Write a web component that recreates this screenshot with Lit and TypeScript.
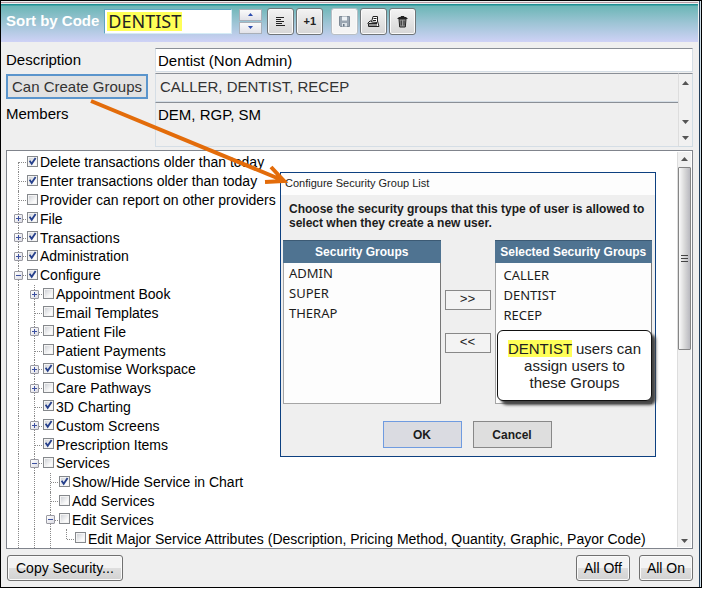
import { LitElement, html, css, svg, nothing } from "lit";
import { customElement, property } from "lit/decorators.js";
import { classMap } from "lit/directives/class-map.js";

interface Permission {
  label: string;
  level: number;
  checked?: boolean;
  node?: "open" | "closed";
  /** first and last rows shorten their guide line to half the row */
  first?: boolean;
  last?: boolean;
}

const PERMISSIONS: Permission[] = [
  { label: "Delete transactions older than today", level: 0, checked: true, first: true },
  { label: "Enter transactions older than today", level: 0, checked: true },
  { label: "Provider can report on other providers", level: 0 },
  { label: "File", level: 0, checked: true, node: "closed" },
  { label: "Transactions", level: 0, checked: true, node: "closed" },
  { label: "Administration", level: 0, checked: true, node: "closed" },
  { label: "Configure", level: 0, checked: true, node: "open" },
  { label: "Appointment Book", level: 1, node: "closed" },
  { label: "Email Templates", level: 1 },
  { label: "Patient File", level: 1, node: "closed" },
  { label: "Patient Payments", level: 1 },
  { label: "Customise Workspace", level: 1, checked: true, node: "closed" },
  { label: "Care Pathways", level: 1, node: "closed" },
  { label: "3D Charting", level: 1, checked: true },
  { label: "Custom Screens", level: 1, checked: true, node: "closed" },
  { label: "Prescription Items", level: 1, checked: true },
  { label: "Services", level: 1, node: "open" },
  { label: "Show/Hide Service in Chart", level: 2, checked: true },
  { label: "Add Services", level: 2 },
  { label: "Edit Services", level: 2, node: "open" },
  {
    label: "Edit Major Service Attributes (Description, Pricing Method, Quantity, Graphic, Payor Code)",
    level: 3,
    last: true,
  },
];

@customElement("permission-tree")
export class PermissionTree extends LitElement {
  @property({ attribute: false }) items: Permission[] = [];

  static styles = css`
    :host { display: flex; flex: 1; min-width: 0; }
    .tree { display: flex; flex-direction: column; flex: 1; min-width: 0; padding: 2px 0 0 3px; overflow: hidden; font-size: 14px; }
    .row { display: flex; flex: 1; min-height: 18px; align-items: center; white-space: nowrap; }
    .guide { position: relative; align-self: stretch; flex: none; width: 16px; display: flex; align-items: center; justify-content: center; }
    .guide::before { content: ""; position: absolute; left: 8px; top: 0; bottom: 0; border-left: 1px dotted #8a8a8a; }
    .guide.first::before { top: 50%; }
    .guide.last::before { bottom: 50%; }
    .branch::after { content: ""; position: absolute; left: 9px; right: 0; top: 50%; border-top: 1px dotted #8a8a8a; }
    .toggle { position: relative; z-index: 1; box-sizing: border-box; width: 9px; height: 9px; margin: 0 0 0 1px; padding: 0; border: 1px solid #9a9aa2; border-radius: 1px; background: linear-gradient(135deg, #fff, #dcdce4); }
    .toggle svg { display: block; width: 7px; height: 7px; }
    .item { display: flex; align-items: center; gap: 2px; padding-left: 1px; line-height: 18px; }
    .box { appearance: none; display: block; box-sizing: border-box; width: 11px; height: 11px; margin: 0 0 2px; border: 1px solid #85888c; outline: none; background: linear-gradient(135deg, #c9ccd2, #fafafa 70%); box-shadow: inset 0 0 0 1px #f4f4f4; }
    .check { position: relative; display: flex; }
    .check svg { position: absolute; left: 0; top: 0; width: 11px; height: 11px; pointer-events: none; }
  `;

  render() {
    return html`<div class="tree" role="tree" aria-label="Permissions">
      ${this.items.map((p) => this.row(p))}
    </div>`;
  }

  private row(p: Permission) {
    const guides = Array.from({ length: p.level + 1 }, (_, i) => i);
    return html`<div class="row" role="treeitem" aria-level=${p.level + 1}>
      ${guides.map((i) => {
        const own = i === p.level;
        return html`<span class=${classMap({ guide: true, branch: own, first: own && !!p.first, last: own && !!p.last })}>
          ${own && p.node
            ? html`<button class="toggle" aria-label="${p.node === "open" ? "Collapse" : "Expand"} ${p.label}">
                <svg viewBox="0 0 7 7" stroke="#3c50a0" fill="none">
                  <path d=${p.node === "open" ? "M1 3.5h5" : "M1 3.5h5M3.5 1v5"} />
                </svg>
              </button>`
            : nothing}
        </span>`;
      })}
      <label class="item">
        <span class="check">
          <input class="box" type="checkbox" .checked=${!!p.checked} />
          ${p.checked
            ? html`<svg viewBox="0 0 11 11" fill="none" stroke="#26408c" stroke-width="1.8"><path d="M2.6 4.8L4.7 7.8L8.6 2" /></svg>`
            : nothing}
        </span>
        <span>${p.label}</span>
      </label>
    </div>`;
  }
}

const icon = {
  up: svg`<path d="M0 4L3.500 0L7 4z"/>`,
  down: svg`<path d="M0 0L3.500 4L7 0z"/>`,
};

@customElement("group-dialog")
export class GroupDialog extends LitElement {
  static styles = css`
    :host { display: block; box-sizing: border-box; border: 1px solid #0d4080; background: #efefef; color: #1c1c1c; }
    .title { margin: 0; padding: 0 4px; height: 22px; background: #fdfdfd; font-size: 11px; font-weight: normal; line-height: 21px; }
    .message { margin: 0; padding: 7px 8px 10px; font-size: 12px; font-weight: bold; line-height: 14px; }
    .lists { display: grid; grid-template-columns: 1fr 46px 1fr; gap: 4px; padding: 0 3px 0 2px; }
    .list { display: flex; flex-direction: column; height: 164px; box-sizing: border-box; border: 1px solid #a5a5a5; border-right-color: #777; border-top: 0; background: #fdfdfd; }
    .caption { margin: 0 -1px; background: #4f7391; border-top: 1px solid #3c5a74; color: #fff; text-align: center; font-size: 12px; font-weight: bold; line-height: 22px; }
    .options { list-style: none; margin: 0; padding: 0 5px; font: 13px/20px "Noto Sans", sans-serif; }
    .chosen { padding: 2px 8px; }
    .moves { display: flex; flex-direction: column; gap: 23px; padding-top: 50px; }
    .move { height: 20px; padding: 0; border: 1px solid #888; background: #f3f3f3; font: 13px/16px "Liberation Mono", monospace; color: #222; }
    .actions { display: flex; justify-content: center; gap: 11px; padding: 17px 2px 8px 0; }
    .action { box-sizing: border-box; width: 79px; height: 27px; border: 1px solid #888; background: #dedede; font: bold 12px "Liberation Sans", sans-serif; color: #1c1c1c; }
    .primary { border-color: #6f9be0; background: #dadbe1; }
  `;

  render() {
    return html`
      <h2 class="title">Configure Security Group List</h2>
      <p class="message">Choose the security groups that this type of user is allowed to select when they create a new user.</p>
      <div class="lists">
        <section class="list">
          <div class="caption" id="all">Security Groups</div>
          <ul class="options" role="listbox" aria-labelledby="all">
            ${["ADMIN", "SUPER", "THERAP"].map((g) => html`<li role="option">${g}</li>`)}
          </ul>
        </section>
        <div class="moves">
          <button class="move" aria-label="Add">&gt;&gt;</button>
          <button class="move" aria-label="Remove">&lt;&lt;</button>
        </div>
        <section class="list">
          <div class="caption" id="picked">Selected Security Groups</div>
          <ul class="options chosen" role="listbox" aria-labelledby="picked">
            ${["CALLER", "DENTIST", "RECEP"].map((g) => html`<li role="option">${g}</li>`)}
          </ul>
        </section>
      </div>
      <div class="actions">
        <button class="action primary">OK</button>
        <button class="action">Cancel</button>
      </div>
    `;
  }
}

@customElement("app-root")
export class AppRoot extends LitElement {
  static styles = css`
    :host { display: flex; box-sizing: border-box; min-height: 100vh; padding-bottom: 9px; background: #fff; font: 15px/18px "Liberation Sans", Arial, sans-serif; color: #000; }
    .shell { position: relative; display: flex; flex-direction: column; flex: 1; min-width: 0; border: 1px solid #000; background: #efefef; box-shadow: inset -1px 0 #cfdfe8, inset -2px 0 #24405c; }
    .bar { display: flex; align-items: center; gap: 5px; height: 40px; box-sizing: border-box; margin: 1px 3px 0 0; padding: 0 5px 3px; border-top: 1px solid #b79aa5; background: linear-gradient(#e8f0f0 0 1px, #1f8f93 1px 2px, #6cb6b6 3px, #9cc4d4 50%, #cfd2f6); }
    .sort { color: #fff; font-weight: bold; }
    .code { position: relative; display: flex; align-items: center; box-sizing: border-box; width: 128px; height: 25px; padding: 0 3px; border: 1px solid #5da3c2; border-right-color: #d5ecf5; border-bottom-color: #d5ecf5; background: #fff; }
    .mark { position: absolute; left: 2px; top: 2px; width: 75px; height: 19px; background: #ffff58; }
    .codeinput { position: relative; width: 100%; padding: 0; border: 0; outline: 0; background: none; font: 18px/19px "Noto Sans", sans-serif; color: #222; }
    .spin { display: grid; gap: 1px; margin-left: 2px; }
    .spin button { box-sizing: border-box; width: 23px; height: 12px; padding: 0; border: 1px solid #a9afb8; background: linear-gradient(#fafafa, #e2e2e8); display: grid; place-items: center; }
    .spin svg { width: 5px; height: 3px; fill: #2c4cae; }
    .tools { display: flex; gap: 2px; }
    .tools + .tools { margin-left: 3px; }
    .tool { box-sizing: border-box; width: 27px; height: 27px; padding: 0; display: grid; place-items: center; border: 1px solid #707578; border-radius: 3px; background: linear-gradient(#f3f3f3, #e4e4e4 50%, #d6d6d6); box-shadow: inset 0 0 0 1px #fafafa; font: bold 11px "Liberation Sans", sans-serif; color: #222; }
    .tool:disabled { border-color: #b8bec4; background: #f4f4f4; }
    .tool svg { display: block; width: 13px; height: 13px; }

    .form { display: grid; grid-template-columns: 149px minmax(0, 1fr) 15px; grid-template-rows: 25px 29px 45px; padding: 6px 8px 0 5px; }
    .wide { grid-column: 2 / 4; }
    .lab { line-height: 24px; }
    .field { display: block; box-sizing: border-box; width: 100%; height: 100%; margin: 0; padding: 3px 2px; border: 1px solid #d5dee6; border-top-color: #8a8f96; border-radius: 0; background: #efefef; font: inherit; color: #000; outline: 0; resize: none; overflow: hidden; }
    .text { height: 24px; background: #fff; padding: 0 2px; }
    .soft { padding: 4px; color: #333; border-right: 0; }
    .people { border-right: 0; }
    .create { box-sizing: border-box; width: 142px; height: 25px; margin-top: 1px; padding: 0; border: 2px solid #5b95cc; background: #e2e2e2; font: inherit; line-height: 18px; color: #333; }
    .scroll { display: flex; flex-direction: column; justify-content: space-between; align-items: center; flex: none; box-sizing: border-box; width: 14px; border-left: 1px solid #ddd; background: #f1f1f1; fill: #555; }
    .scroll svg { width: 7px; height: 4px; }
    .formscroll { grid-column: 3; grid-row: 2 / 4; width: auto; padding: 7px 0 6px; border-top: 1px solid #8a8f96; border-right: 1px solid #cfdbe3; border-bottom: 1px solid #cfdbe3; }
    .formscroll .mid { margin-top: 22px; }

    .panel { position: relative; display: flex; flex: 1; margin: 3px 8px 0 5px; border: 1px solid #80848c; background: #fff; }
    .treescroll { margin: 1px 1px 1px 0; padding: 5px 0 4px; justify-content: flex-start; gap: 6px; }
    .thumb { display: grid; place-items: center; box-sizing: border-box; width: 13px; height: 183px; border: 1px solid #858585; border-radius: 1px; background: linear-gradient(90deg, #fafafa, #d9d9d9 50%, #b9b9bf); }
    .thumb svg { width: 7px; height: 8px; }
    .end { margin-top: auto; }
    .dialog { position: absolute; left: 273px; top: 21px; width: 376px; }
    .callout { position: absolute; left: 490px; top: 179px; box-sizing: border-box; width: 155px; height: 71px; padding: 9px 0; border: 1px solid #111; border-radius: 6px; background: #fff; box-shadow: 4px 4px 3px #444; text-align: center; line-height: 17px; color: #222; }
    .callout mark { background: #ffff58; color: inherit; }
    .arrow { position: absolute; left: 0; top: 0; width: 300px; height: 200px; pointer-events: none; fill: none; stroke: #e36c0a; stroke-width: 4; }

    .foot { display: flex; gap: 9px; padding: 6px 8px 6px 6px; }
    .push { box-sizing: border-box; height: 26px; padding: 0 7px; border: 1px solid #707070; border-radius: 3px; background: linear-gradient(#f3f3f3 0 48%, #dedede 52%, #d2d2d2); box-shadow: inset 0 0 0 1px #fafafa; font: inherit; font-size: 14px; color: #000; }
    .left { margin-right: auto; padding: 0 8px; }
  `;

  render() {
    const up = html`<svg viewBox="0 0 7 4" aria-hidden="true">${icon.up}</svg>`;
    const down = (cls = "") => html`<svg class=${cls} viewBox="0 0 7 4" aria-hidden="true">${icon.down}</svg>`;
    return html`
      <main class="shell">
        <header class="bar">
          <label class="sort" for="code">Sort by Code</label>
          <span class="code"><span class="mark"></span><input class="codeinput" id="code" value="DENTIST" /></span>
          <span class="spin">
            <button aria-label="Previous">${up}</button>
            <button aria-label="Next">${down()}</button>
          </span>
          <span class="tools">
            <button class="tool" aria-label="List">
              <svg viewBox="0 0 13 13" stroke="#222"><path d="M2 2.500h8M2 4.500h5M2 6.500h8M2 8.500h6M2 10.500h9" /></svg>
            </button>
            <button class="tool">+1</button>
          </span>
          <span class="tools">
            <button class="tool" aria-label="Save" disabled>
              <svg viewBox="0 0 13 13"><path d="M1.500 1.500h10v10h-9l-1-1z" fill="#9aa5b1" stroke="#7f8a96" /><path d="M4 1.500h5v4H4z" fill="#eef2f5" /><path d="M4 8h5v3.500H4z" fill="#dde3e8" /><path d="M5 9h1.500v2.500H5z" fill="#697684" /></svg>
            </button>
            <button class="tool" aria-label="Print">
              <svg viewBox="0 0 13 13" fill="#fff" stroke="#222"><path d="M4.500 7L6 1.500h4.500v6z" /><path d="M.5 8.500L3 6h1.500M10.500 6l1.500 5.500H1.500v-3H10" /><path d="M6.500 3.500h3M6 5.500h3M2 10h8" /></svg>
            </button>
            <button class="tool" aria-label="Delete">
              <svg viewBox="0 0 13 13" fill="#999" stroke="#222"><path d="M3 4h7l-.7 8H3.700z" /><path d="M1.500 3.500h10M5 3V1.500h3V3M2.500 2.500h8M5.200 5.500v5M8 5.500v5" /></svg>
            </button>
          </span>
        </header>

        <section class="form">
          <label class="lab" for="desc">Description</label>
          <div class="wide"><input class="field text" id="desc" value="Dentist (Non Admin)" /></div>
          <div><button class="create">Can Create Groups</button></div>
          <textarea class="field soft" aria-label="Groups that can be created" readonly .value=${"CALLER, DENTIST, RECEP"}></textarea>
          <label class="lab" for="members">Members</label>
          <textarea class="field people" id="members" readonly .value=${"DEM, RGP, SM"}></textarea>
          <div class="scroll formscroll">${up}${down("mid")}${down()}</div>
        </section>

        <section class="panel">
          <permission-tree .items=${PERMISSIONS}></permission-tree>
          <div class="scroll treescroll">
            ${up}
            <div class="thumb">
              <svg viewBox="0 0 7 8" stroke="#444"><path d="M0 .5h7M0 3.500h7M0 6.500h7" /></svg>
            </div>
            ${down("end")}
          </div>
          <group-dialog class="dialog" role="dialog"></group-dialog>
          <aside class="callout"><mark>DENTIST</mark> users can<br />assign users to<br />these Groups</aside>
        </section>

        <footer class="foot">
          <button class="push left">Copy Security...</button>
          <button class="push">All Off</button>
          <button class="push">All On</button>
        </footer>

        <svg class="arrow" viewBox="0 0 300 200" aria-hidden="true">
          <path d="M90 100L281 179M270 166L283 180L264 181" />
        </svg>
      </main>
    `;
  }
}
